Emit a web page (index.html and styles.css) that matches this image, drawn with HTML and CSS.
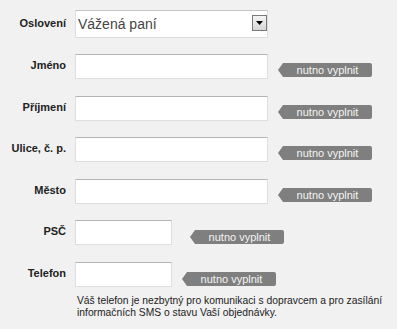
FILE: index.html
```html
<!DOCTYPE html>
<html lang="cs">
<head>
    <meta charset="UTF-8">
    <title>Doručovací údaje</title>
    <link rel="stylesheet" href="styles.css">
</head>
<body>
    <form class="address-form">
        <div class="row row-select">
            <label for="osloveni">Oslovení</label>
            <div class="select-wrap">
                <select id="osloveni" name="osloveni">
                    <option>Vážená paní</option>
                    <option>Vážený pane</option>
                </select>
                <span class="select-btn">
                    <svg width="7" height="4" viewBox="0 0 7 4"><path d="M0 0h7L3.5 4z" fill="#000"/></svg>
                </span>
            </div>
        </div>

        <div class="row">
            <label for="jmeno">Jméno</label>
            <input type="text" id="jmeno" name="jmeno">
            <span class="required">nutno vyplnit</span>
        </div>

        <div class="row">
            <label for="prijmeni">Příjmení</label>
            <input type="text" id="prijmeni" name="prijmeni">
            <span class="required">nutno vyplnit</span>
        </div>

        <div class="row">
            <label for="ulice">Ulice, č. p.</label>
            <input type="text" id="ulice" name="ulice">
            <span class="required">nutno vyplnit</span>
        </div>

        <div class="row">
            <label for="mesto">Město</label>
            <input type="text" id="mesto" name="mesto">
            <span class="required">nutno vyplnit</span>
        </div>

        <div class="row">
            <label for="psc">PSČ</label>
            <input type="text" id="psc" name="psc" class="short">
            <span class="required required-psc">nutno vyplnit</span>
        </div>

        <div class="row row-phone">
            <label for="telefon">Telefon</label>
            <input type="text" id="telefon" name="telefon" class="short">
            <span class="required required-phone">nutno vyplnit</span>
        </div>
        <p class="hint">Váš telefon je nezbytný pro komunikaci s dopravcem a pro zasílání informačních SMS o stavu Vaší objednávky.</p>
    </form>
</body>
</html>
```

FILE: styles.css
```css
body {
    margin: 0;
    background-color: #f1f1f1;
    font-family: "Liberation Sans", Arial, sans-serif;
    color: #222;
}
.address-form {
    padding-top: 10px;
}
.row {
    display: flex;
    align-items: flex-start;
    height: 25px;
    margin-bottom: 16.6px;
}
.row label {
    width: 66px;
    margin-right: 9px;
    text-align: right;
    font-size: 11px;
    font-weight: bold;
    line-height: 23px;
    flex-shrink: 0;
}
.row-select {
    height: 28px;
    margin-bottom: 16px;
}
.row-select label {
    line-height: 27px;
}
.select-wrap {
    position: relative;
    width: 193px;
    height: 28px;
}
.select-wrap select {
    appearance: none;
    -webkit-appearance: none;
    box-sizing: border-box;
    width: 100%;
    height: 28px;
    margin: 0;
    padding: 0 0 0 2px;
    border: 1px solid #dedee2;
    border-top-color: #c4c4c8;
    border-radius: 0;
    background: #fff;
    font-family: "Liberation Sans", Arial, sans-serif;
    font-size: 14px;
    color: #444;
    outline: none;
}
.select-btn {
    position: absolute;
    top: 5px;
    right: 1px;
    box-sizing: border-box;
    width: 15px;
    height: 16px;
    border: 1px solid #7a7a7a;
    background: linear-gradient(#f4f4f4, #d6d6d6);
    display: flex;
    align-items: center;
    justify-content: center;
    pointer-events: none;
}
.row input[type="text"] {
    box-sizing: border-box;
    width: 193px;
    height: 25px;
    margin: 0;
    padding: 2px 4px;
    border: 1px solid #dedee2;
    border-top-color: #b4b4b8;
    border-radius: 0;
    background: #fff;
    font-family: "Liberation Sans", Arial, sans-serif;
    font-size: 13px;
    flex-shrink: 0;
}
.row input.short {
    width: 97px;
}
.required {
    position: relative;
    margin-top: 9px;
    margin-left: 15px;
    width: 89px;
    height: 14px;
    background-color: #7f7f7f;
    border-radius: 0 2px 2px 0;
    color: #f4f4f4;
    font-size: 11px;
    line-height: 14px;
    text-align: center;
    flex-shrink: 0;
}
.required::before {
    content: "";
    position: absolute;
    left: -5px;
    top: 0;
    border-style: solid;
    border-width: 7px 5px 7px 0;
    border-color: transparent #7f7f7f transparent transparent;
}
.required-psc {
    margin-left: 23px;
    margin-top: 10px;
}
.required-phone {
    margin-left: 15px;
    margin-top: 10px;
}
.row-phone {
    margin-bottom: 8px;
}
.hint {
    margin: 0;
    padding-left: 77px;
    width: 310px;
    font-size: 10.3px;
    line-height: 12px;
    color: #222;
}
```
